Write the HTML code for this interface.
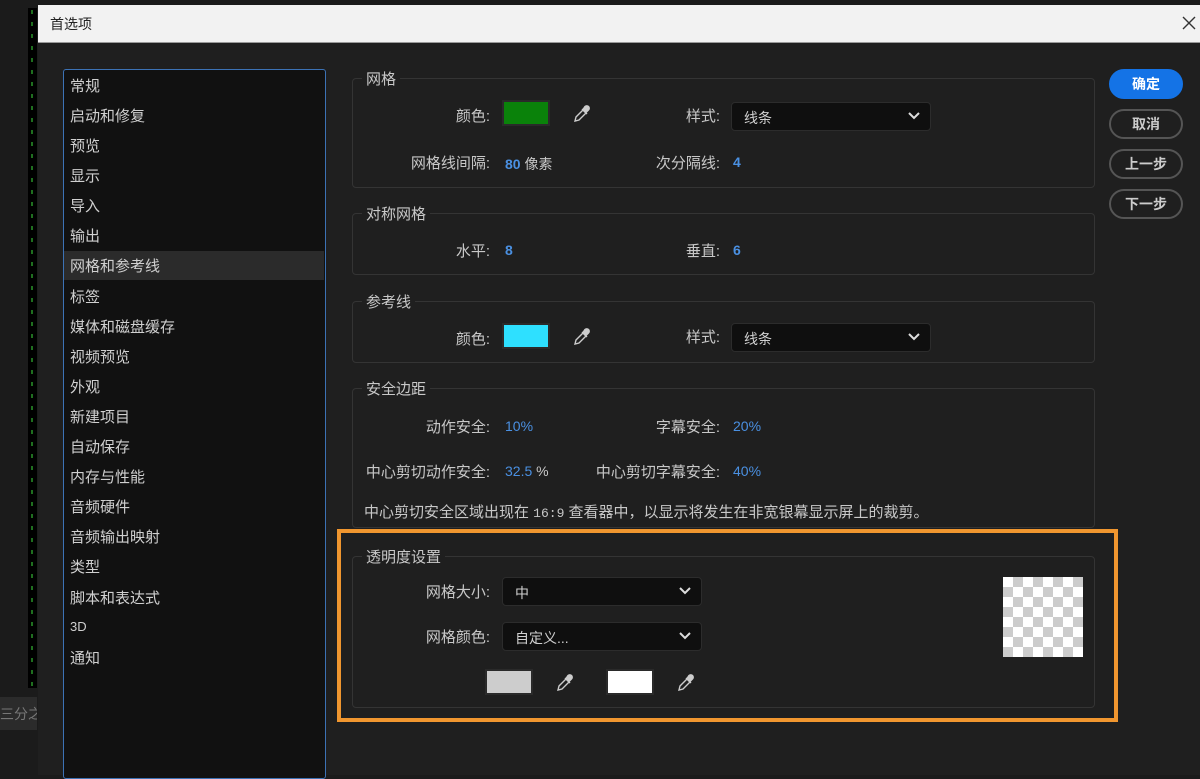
<!DOCTYPE html>
<html><head><meta charset="utf-8"><style>
*{box-sizing:border-box;margin:0;padding:0}
body{width:1200px;height:775px;background:#1b1b1b;position:relative;overflow:hidden;font-family:"Liberation Sans","Noto Sans CJK SC",sans-serif;color:#c8c8c8;font-size:14px}
.abs{position:absolute}
.title{left:38px;top:5px;width:1162px;height:38px;background:#f2f2f2;border-bottom:1px solid #999;color:#222;font-size:14px;padding:9px 12px}
.dlg{left:38px;top:43px;width:1162px;height:732px;background:#1f1f1f}
.list{left:63px;top:69px;width:263px;height:710px;background:#111;border:1px solid #3c72b5;border-radius:3px}
.item{position:absolute;left:6px;font-size:15px;color:#d0d0d0}
.sel{left:64px;top:251px;width:260px;height:29px;background:#2b2b2b}
.grp{border:1px solid #343434;border-radius:4px}
.gt{position:absolute;background:#1f1f1f;padding:0 4px;font-size:15px;color:#c8c8c8}
.lbl{position:absolute;font-size:15px;color:#c8c8c8;text-align:right}
.val{position:absolute;font-size:14px;color:#4a90e2;font-weight:bold}
.sw{position:absolute;width:48px;height:26px;border:2px solid #2a2a2a}
.dd{position:absolute;height:29px;background:#0f0f0f;border:1px solid #2c2c2c;border-radius:4px;font-size:14px;color:#d0d0d0;padding:5px 12px}
.dd svg{position:absolute;right:10px;top:9px}
.btn{position:absolute;left:1109px;width:74px;height:30px;border:2px solid #555;border-radius:15px;text-align:center;font-size:14px;font-weight:bold;color:#ccc;line-height:26px}
</style></head><body>
<svg width="0" height="0" style="position:absolute"><defs><g id="eye"><path d="M3 18L4 14L11 7L14 10L7 17Z" fill="none" stroke="#ccc" stroke-width="1.4"/><path d="M10 6L15 11M13 3.5a2.2 2.2 0 0 1 3.5 3.5L14 9.5L11 6.5Z" fill="#ccc" stroke="#ccc" stroke-width="1.4"/></g></defs></svg>
<div class="abs" style="left:28px;top:8px;width:9px;height:680px;background:#000"></div>
<svg class="abs" style="left:28px;top:10px" width="9" height="680"><line x1="4" y1="0" x2="4" y2="680" stroke="#1f6e1f" stroke-width="2" stroke-dasharray="4 8"/></svg>
<div class="abs" style="left:0;top:697px;width:37px;height:33px;background:#2b2b2b;color:#777;font-size:14px;padding-top:7px;white-space:nowrap;overflow:hidden">三分之</div>
<div class="abs title">首选项</div>
<svg class="abs" style="left:1182px;top:16px" width="14" height="14"><path d="M1 1L13 13M13 1L1 13" stroke="#333" stroke-width="1.4"/></svg>
<div class="abs dlg"></div>
<div class="abs list"></div>
<div class="abs sel"></div>
<div class="abs" style="left:64px;top:69px;width:262px">
<div class="item" style="top:6px">常规</div>
<div class="item" style="top:36px">启动和修复</div>
<div class="item" style="top:66px">预览</div>
<div class="item" style="top:96px">显示</div>
<div class="item" style="top:126px">导入</div>
<div class="item" style="top:156px">输出</div>
<div class="item" style="top:186px">网格和参考线</div>
<div class="item" style="top:217px">标签</div>
<div class="item" style="top:247px">媒体和磁盘缓存</div>
<div class="item" style="top:277px">视频预览</div>
<div class="item" style="top:307px">外观</div>
<div class="item" style="top:337px">新建项目</div>
<div class="item" style="top:367px">自动保存</div>
<div class="item" style="top:397px">内存与性能</div>
<div class="item" style="top:427px">音频硬件</div>
<div class="item" style="top:457px">音频输出映射</div>
<div class="item" style="top:487px">类型</div>
<div class="item" style="top:518px">脚本和表达式</div>
<div class="item" style="top:550px;font-size:13px">3D</div>
<div class="item" style="top:578px">通知</div>
</div>

<div class="abs grp" style="left:352px;top:78px;width:743px;height:110px"></div>
<div class="gt" style="left:362px;top:68px">网格</div>
<div class="lbl" style="left:380px;width:110px;top:105px">颜色:</div>
<div class="sw" style="left:502px;top:100px;background:#0a820a"></div>
<svg class="abs" style="left:572px;top:103px" width="20" height="20"><use href="#eye"/></svg>
<div class="lbl" style="left:620px;width:100px;top:105px">样式:</div>
<div class="dd" style="left:731px;top:102px;width:200px">线条<svg width="12" height="8"><path d="M1 1l5 5 5-5" stroke="#ddd" stroke-width="2" fill="none"/></svg></div>
<div class="lbl" style="left:380px;width:110px;top:152px">网格线间隔:</div>
<div class="val" style="left:505px;top:154px">80 <span style="color:#c8c8c8;font-weight:normal">像素</span></div>
<div class="lbl" style="left:620px;width:100px;top:152px">次分隔线:</div>
<div class="val" style="left:733px;top:154px">4</div>

<div class="abs grp" style="left:352px;top:213px;width:743px;height:62px"></div>
<div class="gt" style="left:362px;top:203px">对称网格</div>
<div class="lbl" style="left:380px;width:110px;top:240px">水平:</div>
<div class="val" style="left:505px;top:242px">8</div>
<div class="lbl" style="left:620px;width:100px;top:240px">垂直:</div>
<div class="val" style="left:733px;top:242px">6</div>

<div class="abs grp" style="left:352px;top:301px;width:743px;height:62px"></div>
<div class="gt" style="left:362px;top:291px">参考线</div>
<div class="lbl" style="left:380px;width:110px;top:328px">颜色:</div>
<div class="sw" style="left:502px;top:323px;background:#2ee0ff"></div>
<svg class="abs" style="left:572px;top:326px" width="20" height="20"><use href="#eye"/></svg>
<div class="lbl" style="left:620px;width:100px;top:326px">样式:</div>
<div class="dd" style="left:731px;top:323px;width:200px">线条<svg width="12" height="8"><path d="M1 1l5 5 5-5" stroke="#ddd" stroke-width="2" fill="none"/></svg></div>

<div class="abs grp" style="left:352px;top:388px;width:743px;height:140px"></div>
<div class="gt" style="left:362px;top:378px">安全边距</div>
<div class="lbl" style="left:380px;width:110px;top:416px">动作安全:</div>
<div class="val" style="left:505px;top:418px;font-weight:normal">10%</div>
<div class="lbl" style="left:600px;width:120px;top:416px">字幕安全:</div>
<div class="val" style="left:733px;top:418px;font-weight:normal">20%</div>
<div class="lbl" style="left:362px;width:128px;top:461px">中心剪切动作安全:</div>
<div class="val" style="left:505px;top:463px;font-weight:normal">32.5 <span style="color:#c8c8c8">%</span></div>
<div class="lbl" style="left:580px;width:140px;top:461px">中心剪切字幕安全:</div>
<div class="val" style="left:733px;top:463px;font-weight:normal">40%</div>
<div class="lbl" style="left:364px;top:501px;text-align:left">中心剪切安全区域出现在 <span style="font-family:'Liberation Mono',monospace;font-size:13px">16:9</span> 查看器中，以显示将发生在非宽银幕显示屏上的裁剪。</div>

<div class="abs" style="left:337px;top:529px;width:781px;height:193px;border:4px solid #f0962f"></div>
<div class="abs grp" style="left:352px;top:556px;width:743px;height:152px"></div>
<div class="gt" style="left:362px;top:546px">透明度设置</div>
<div class="lbl" style="left:380px;width:110px;top:581px">网格大小:</div>
<div class="dd" style="left:502px;top:577px;width:200px">中<svg width="12" height="8"><path d="M1 1l5 5 5-5" stroke="#ddd" stroke-width="2" fill="none"/></svg></div>
<div class="lbl" style="left:380px;width:110px;top:626px">网格颜色:</div>
<div class="dd" style="left:502px;top:622px;width:200px">自定义...<svg width="12" height="8"><path d="M1 1l5 5 5-5" stroke="#ddd" stroke-width="2" fill="none"/></svg></div>
<div class="sw" style="left:485px;top:669px;background:#cdcdcd"></div>
<svg class="abs" style="left:555px;top:672px" width="20" height="20"><use href="#eye"/></svg>
<div class="sw" style="left:606px;top:669px;background:#fff"></div>
<svg class="abs" style="left:676px;top:672px" width="20" height="20"><use href="#eye"/></svg>
<div class="abs" style="left:1003px;top:577px;width:80px;height:80px;background-color:#fff;background-image:linear-gradient(45deg,#ccc 25%,transparent 25%,transparent 75%,#ccc 75%),linear-gradient(45deg,#ccc 25%,transparent 25%,transparent 75%,#ccc 75%);background-size:20px 20px;background-position:0 0,10px 10px"></div>

<div class="btn" style="top:69px;background:#1473e6;border-color:#1473e6;color:#fff">确定</div>
<div class="btn" style="top:109px">取消</div>
<div class="btn" style="top:149px">上一步</div>
<div class="btn" style="top:189px">下一步</div>
</body></html>
